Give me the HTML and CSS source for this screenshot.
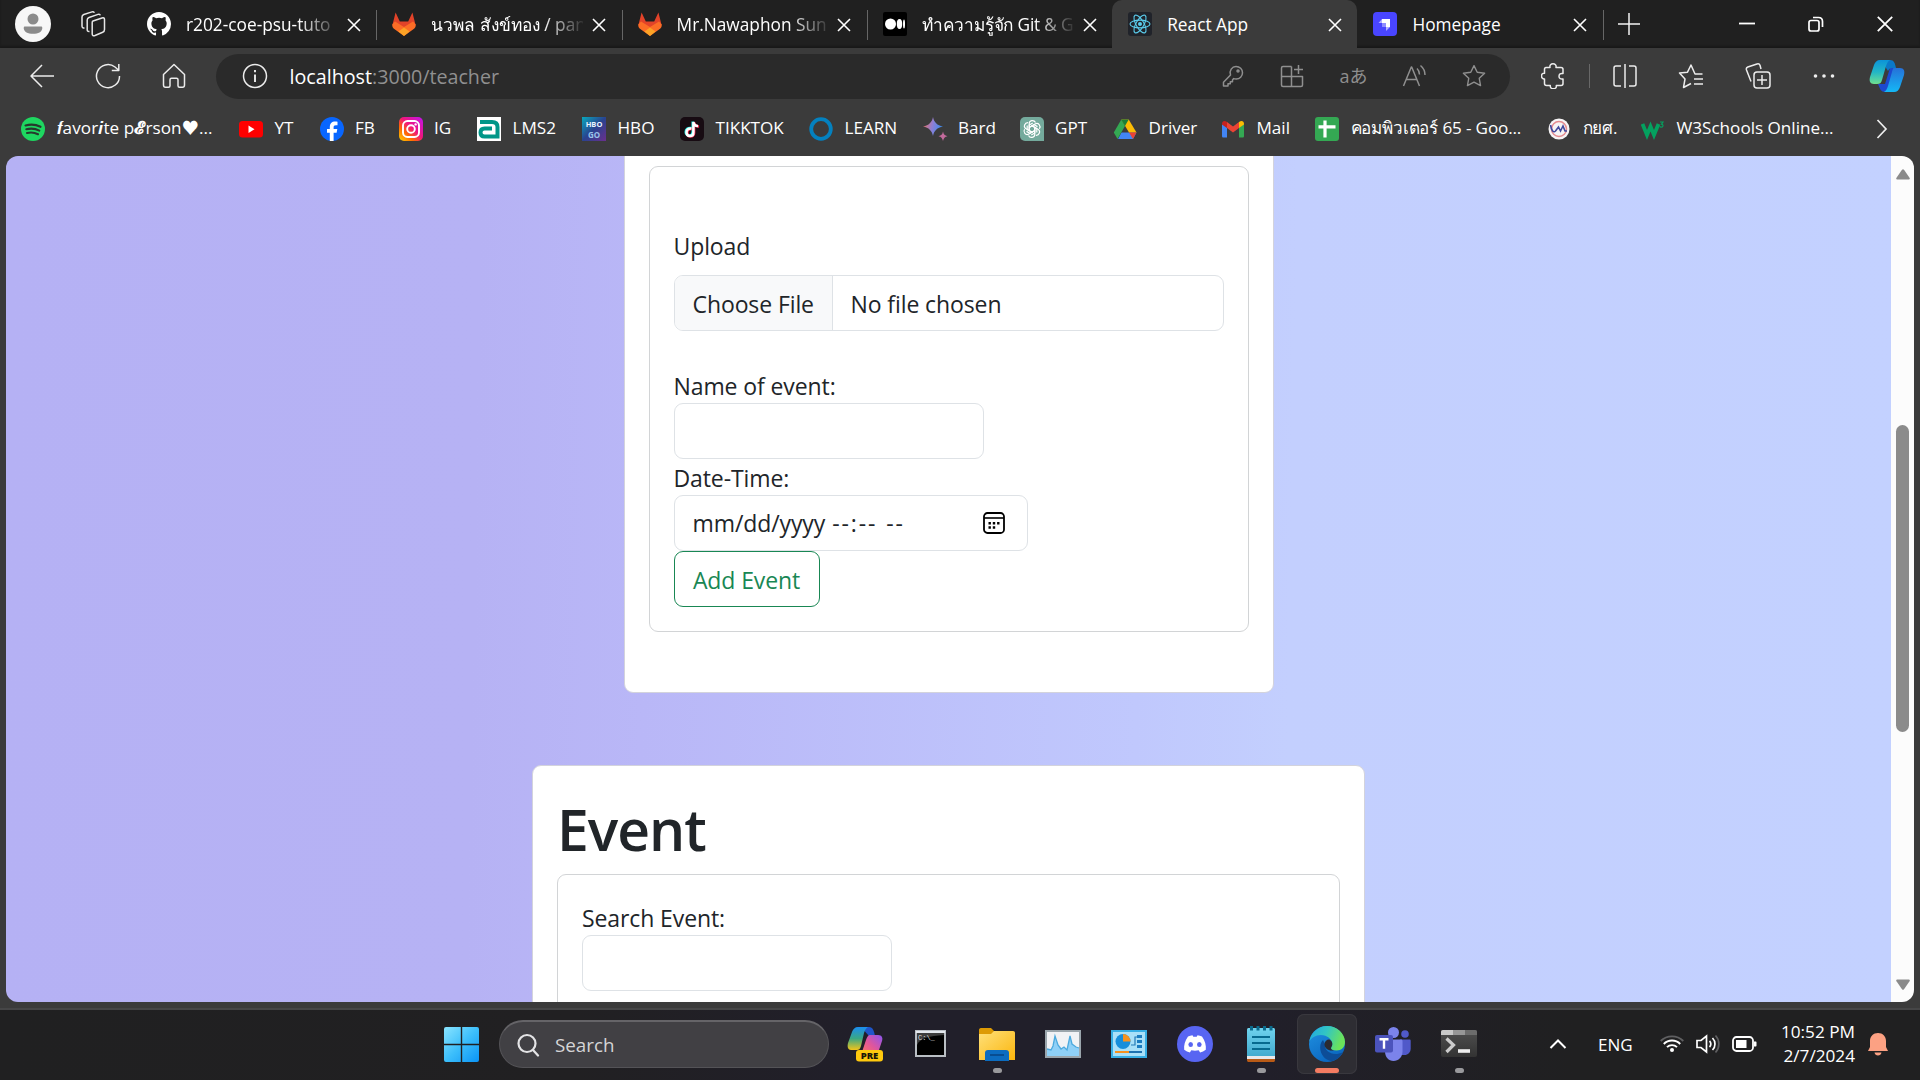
FILE: index.html
```html
<!DOCTYPE html>
<html lang="en">
<head>
<meta charset="utf-8">
<title>React App</title>
<link rel="stylesheet" href="styles.css">
</head>
<body>
<svg class="defs" width="0" height="0" aria-hidden="true">
  <defs>
    <symbol id="gitlab" viewBox="0 0 24 24"><path fill="#e24329" d="M0.4 13 3.6 0.500l4.200 9h8.400l4.200-9 3.200 12.500L12 17z"/><path fill="#fc6d26" d="M.3 12.500 3 9.600 12 15l9-5.400 2.700 2.900c.3 2-.7 3.500-2 4.600L12 24l-9.700-6.900C1 16 0 14.500.3 12.500z"/><path fill="#fca326" d="m6.500 19.500 5.500-4 5.500 4L12 24z"/></symbol>
    <symbol id="close" viewBox="0 0 14 14"><path d="M1 1l12 12M13 1 1 13" fill="none" stroke="currentColor" stroke-width="1.600"/></symbol>
    <linearGradient id="ig" x1="0" y1="1" x2="1" y2="0"><stop offset="0" stop-color="#ffd600"/><stop offset=".3" stop-color="#ff6a00"/><stop offset=".55" stop-color="#f0157e"/><stop offset="1" stop-color="#c013f0"/></linearGradient>
    <linearGradient id="bard" x1="0" y1=".5" x2="1" y2=".7"><stop offset="0" stop-color="#e3706e"/><stop offset=".45" stop-color="#8c7fd6"/><stop offset="1" stop-color="#2f8df0"/></linearGradient>
    <linearGradient id="hbo" x1="0" y1="0" x2="1" y2="1"><stop offset="0" stop-color="#08a9bd"/><stop offset=".5" stop-color="#29438f"/><stop offset="1" stop-color="#6b2f8d"/></linearGradient>
    <linearGradient id="cpL" x1="0" y1="0" x2="0" y2="1"><stop offset="0" stop-color="#0c93d8"/><stop offset=".5" stop-color="#22b6c6"/><stop offset="1" stop-color="#6fdf8f"/></linearGradient>
    <linearGradient id="cpR" x1="0" y1="0" x2="0" y2="1"><stop offset="0" stop-color="#2671d8"/><stop offset="1" stop-color="#14b8f6"/></linearGradient>
    <linearGradient id="preL" x1="0" y1="0" x2="0" y2="1"><stop offset="0" stop-color="#1b8df0"/><stop offset=".5" stop-color="#3aa884"/><stop offset="1" stop-color="#f3c419"/></linearGradient>
    <linearGradient id="preR" x1="0" y1="1" x2="1" y2="0"><stop offset="0" stop-color="#ff7a59"/><stop offset=".5" stop-color="#e0569c"/><stop offset="1" stop-color="#8a55f0"/></linearGradient>
    <linearGradient id="win" x1="0" y1="0" x2="1" y2="1"><stop offset="0" stop-color="#8ae4ff"/><stop offset=".5" stop-color="#3dbffb"/><stop offset="1" stop-color="#0a93f5"/></linearGradient>
    <linearGradient id="folder" x1="0" y1="0" x2="1" y2="1"><stop offset="0" stop-color="#ffe07a"/><stop offset="1" stop-color="#fbb60d"/></linearGradient>
    <linearGradient id="note" x1="0" y1="0" x2="0" y2="1"><stop offset="0" stop-color="#6fd3ee"/><stop offset="1" stop-color="#43abcf"/></linearGradient>
    <linearGradient id="edgeTop" x1="0" y1="0" x2="1" y2=".3"><stop offset="0" stop-color="#1fa6e4"/><stop offset=".5" stop-color="#32c5c4"/><stop offset="1" stop-color="#6be35a"/></linearGradient>
    <linearGradient id="edgeLow" x1="0" y1="0" x2=".6" y2="1"><stop offset="0" stop-color="#2193e3"/><stop offset="1" stop-color="#0a66bf"/></linearGradient>
    <linearGradient id="term" x1="0" y1="0" x2="0" y2="1"><stop offset="0" stop-color="#505050"/><stop offset="1" stop-color="#333333"/></linearGradient>
  </defs>
</svg>

<header class="tabstrip">
  <div class="profile"><svg width="36" height="36" viewBox="0 0 36 36"><circle cx="18" cy="18" r="18" fill="#f7f7f7"/><circle cx="18" cy="13" r="5.500" fill="#8b8b8b"/><path d="M9.500 20.500h17c.8 0 .8 1 .7 2.200-.4 3-3.700 5-9.200 5s-8.800-2-9.200-5c-.1-1.200 0-2.200.7-2.200z" fill="#8b8b8b"/></svg></div>
  <div class="workspaces"><svg width="26" height="26" viewBox="0 0 26 26" fill="none" stroke="#e6e6e6" stroke-width="1.500"><path d="m13 10 9-3c1.500-.5 2.500 0 2.500 1.500v10c0 1.500-.5 2.300-1.800 2.800L15 24.500c-1.800.6-2.800 0-2.800-1.500V11.500c0-.8.200-1.300.8-1.500z"/><path d="M9.500 20.500c-1.500.2-2.300-.4-2.300-1.800V9c0-1.200.5-2 1.800-2.500L18 3.400c1.200-.4 2 0 2.200 1"/><path d="M4.500 17C3 17.200 2 16.500 2 15V6c0-1.200.5-2 1.800-2.500L12 .9c1.200-.4 2 0 2.200 1"/></svg></div>
  <div class="tab"><svg class="fav" viewBox="0 0 16 16"><path fill="#fff" d="M8 0C3.580 0 0 3.580 0 8c0 3.540 2.290 6.530 5.470 7.590.4.070.55-.17.55-.38v-1.490c-2.010.37-2.530-.49-2.690-.94-.09-.23-.48-.94-.82-1.130-.28-.15-.68-.52-.01-.53.63-.01 1.080.58 1.230.82.720 1.210 1.870.87 2.330.66.070-.52.280-.87.510-1.070-1.780-.2-3.640-.89-3.640-3.950 0-.87.310-1.590.820-2.150-.08-.2-.36-1.020.08-2.120 0 0 .67-.21 2.200.82a7.600 7.600 0 0 1 4 0c1.530-1.040 2.200-.82 2.200-.82.44 1.100.16 1.920.08 2.120.51.560.82 1.270.82 2.150 0 3.070-1.870 3.750-3.650 3.950.29.250.54.730.54 1.480v2.200c0 .21.150.46.550.38A8 8 0 0 0 16 8c0-4.420-3.580-8-8-8z"/></svg><span class="title fade">r202-coe-psu-tuto</span><svg class="x"><use href="#close"/></svg></div>
  <div class="tab"><svg class="fav"><use href="#gitlab"/></svg><span class="title fade">นวพล สังข์ทอง / pan</span><svg class="x"><use href="#close"/></svg></div>
  <div class="tab"><svg class="fav"><use href="#gitlab"/></svg><span class="title fade">Mr.Nawaphon Sun</span><svg class="x"><use href="#close"/></svg></div>
  <div class="tab last"><svg class="fav" viewBox="0 0 24 24"><rect width="24" height="24" rx="2"/><g fill="#fff"><circle cx="7.500" cy="12" r="5.500"/><ellipse cx="16.500" cy="12" rx="2.700" ry="5"/><ellipse cx="21" cy="12" rx="1" ry="4.500"/></g></svg><span class="title fade thai-tab">ทำความรู้จัก Git &amp; G</span><svg class="x"><use href="#close"/></svg></div>
  <div class="tab active"><svg class="fav" viewBox="0 0 24 24"><rect width="24" height="24" rx="3" fill="#20232a"/><g fill="none" stroke="#5bcdec" stroke-width="1.100"><ellipse cx="12" cy="12" rx="10" ry="3.900"/><ellipse cx="12" cy="12" rx="10" ry="3.900" transform="rotate(60 12 12)"/><ellipse cx="12" cy="12" rx="10" ry="3.900" transform="rotate(120 12 12)"/></g><circle cx="12" cy="12" r="2" fill="#5bcdec"/></svg><span class="title">React App</span><svg class="x"><use href="#close"/></svg></div>
  <div class="tab"><svg class="fav" viewBox="0 0 24 24"><rect width="24" height="24" rx="4" fill="#4945ff"/><path fill="#fff" d="M9 7h8v8h-4v-4H9z"/><path fill="#b3b1ff" d="M9 7v4H5.500zM13 15h4l-4 4z"/><path fill="#8f8cff" d="M9 11h4v4h-3.500a.5.5 0 0 1-.5-.5z"/></svg><span class="title">Homepage</span><svg class="x"><use href="#close"/></svg></div>
  <div class="newtab"><svg width="22" height="22" viewBox="0 0 22 22"><path d="M11 0v22M0 11h22" stroke="#f2f2f2" stroke-width="1.500"/></svg></div>
  <div class="wincontrols">
    <svg width="16" height="16" viewBox="0 0 16 16"><path d="M0 7.500h16" stroke="#fff" stroke-width="1.800"/></svg>
    <svg width="16" height="16" viewBox="0 0 16 16" fill="none" stroke="#fff" stroke-width="1.700"><rect x="1" y="4.500" width="10" height="10.500" rx="2"/><path d="M5 1.500h5.500c2.500 0 4 1.500 4 4V11"/></svg>
    <svg width="16" height="16" viewBox="0 0 16 16"><path d="M.8.8l14.400 14.400M15.200.8.8 15.200" stroke="#fff" stroke-width="1.800"/></svg>
  </div>
</header>

<nav class="toolbar">
  <svg viewBox="0 0 26 26"><path d="M25 13H2M13 2 2 13l11 11"/></svg>
  <svg viewBox="0 0 26 26"><path d="M24.500 13A11.500 11.500 0 1 1 20 4l3.500 3M23.800 1v6.500h-7"/></svg>
  <svg viewBox="0 0 26 26"><path d="M2.500 11.500 13 1.500l10.500 10V22c0 1.500-.8 2.300-2 2.300h-3c-1 0-1.500-.6-1.500-1.500v-6c0-1-.5-1.500-1.500-1.500h-5c-1 0-1.500.5-1.500 1.500v6c0 .9-.5 1.500-1.500 1.500h-3c-1.200 0-2-.8-2-2.300z"/></svg>
  <div class="address">
    <svg class="info" viewBox="0 0 26 26"><circle cx="13" cy="13" r="11.500"/><path d="M13 11.500v7.500M13 7v2.200" stroke-width="1.900"/></svg>
    <span class="url"><b>localhost</b>:3000/teacher</span>
    <div class="actions">
      <svg viewBox="0 0 24 24"><path d="M15 2.500c3.800 0 6.500 2.800 6.500 6.300s-2.800 6.200-6.300 6.200c-1 0-1.700-.1-2.500-.4L11.500 16v1.800H9.300v2H7V22H2.500v-3.800l7-7.200C8 6.500 11 2.500 15 2.500z"/><circle cx="17" cy="7" r="1"/></svg>
      <svg viewBox="0 0 24 24"><path d="M11.500 2.500H3c-1 0-1.500.5-1.500 1.500v17c0 1 .5 1.500 1.500 1.500h18c1 0 1.500-.5 1.500-1.500v-8.500h-21M11.500 2.500v20M18.500 1v9M14 5.500h9"/></svg>
      <span class="translate">aあ</span>
      <svg viewBox="0 0 24 24"><path d="m1.500 22 7.800-19h.4l7.800 19M4.300 15.500h10.500M15 4.500c1.700 1.600 2.500 3.500 2.500 6M18.500 1.500c3 2.500 4.500 5.500 4.500 9.500"/></svg>
      <svg viewBox="0 0 26 26"><path d="m13 1.800 3.500 7.100 8 1.100-5.800 5.500 1.400 7.900L13 19.700l-7.100 3.700 1.400-7.900L1.500 10l8-1.100z"/></svg>
    </div>
  </div>
  <div class="tools">
    <svg viewBox="0 0 26 26"><path d="M5 4.500h4C8.500 2 10 .8 12 .8s3.500 1.200 3 3.700h5c1.200 0 2 .8 2 2v4c-2.500-.5-4 .7-4 2.700s1.500 3.200 4 2.700v4.600c0 1.200-.8 2-2 2h-4.700c.5 2.200-1 3.200-3 3.200s-3.300-1-3-3.200H5.500c-1.200 0-2-.8-2-2v-4.600C2 16.200.5 15 .5 13s1.500-3.100 3-2.700V6.500c0-1.200.5-2 1.500-2z"/></svg>
    <i></i>
    <svg viewBox="0 0 26 26"><path d="M9 3H4C2.800 3 2 3.800 2 5v16c0 1.200.8 2 2 2h5M17 3h5c1.200 0 2 .8 2 2v16c0 1.200-.8 2-2 2h-5M13 1v24"/></svg>
    <svg viewBox="0 0 26 26"><path d="M24.500 11H17L13 2 9.500 9.200 1.500 10l5.500 6-1.500 8.500 7.500-4M16 16h9M16 21h9"/></svg>
    <svg viewBox="0 0 26 26"><rect x="9" y="9" width="16" height="16" rx="3"/><path d="M17 12v10M12 17h10M6 18.500 1.500 7c-.5-1.500 0-2.500 1.300-3L12 1c1.500-.5 2.500 0 3 1.300L16 6"/></svg>
    <svg viewBox="0 0 26 26"><g fill="#eee" stroke="none"><circle cx="4.500" cy="13" r="1.800"/><circle cx="13" cy="13" r="1.800"/><circle cx="21.500" cy="13" r="1.800"/></g></svg>
  </div>
  <svg class="copilot" viewBox="0 0 36 34"><path stroke="none" fill="#1c49cf" d="M9 25h7l5-16h6l-6 19c-1 3-2 5-5 5-4 0-5-3-7-8z"/><path stroke="none" fill="#0b78c8" d="M12 1h9c4 0 5 3 6 8h-4c-2 0-3 1-4 3z"/><path stroke="none" fill="url(#cpL)" d="M11 1h10c-2 1-3 3-4 6l-4 14c-1 3-2 4-5 4H5c-4 0-5-3-4-7L5 6c1-3 3-5 6-5z"/><path stroke="none" fill="url(#cpR)" d="M25 9h6c4 0 5 3 4 7l-4 12c-1 3-3 5-6 5H15c2-1 3-3 4-6l4-14c.5-2 1-4 2-4z"/></svg>
</nav>

<nav class="bookmarks">
  <a><svg viewBox="0 0 24 24"><circle cx="12" cy="12" r="12" fill="#1ed760"/><path d="M4.500 8.500c5-1.500 10.500-1 15 1.300M5.300 12.300c4.500-1.200 9-.8 13 1.300M6 16c4-1 7.500-.6 11 1.200" fill="none" stroke="#263a2d" stroke-width="2.100" stroke-linecap="round"/></svg><span class="fancy">𝒇avor𝒊te p<b>𝓔</b>rson♥...</span></a>
  <a><svg viewBox="0 0 24 24"><rect y="4" width="24" height="16.500" rx="3.500" fill="#f00"/><path fill="#fff" d="m9.500 8.500 6 3.700-6 3.700z"/></svg><span>YT</span></a>
  <a><svg viewBox="0 0 24 24"><circle cx="12" cy="12" r="12" fill="#0866ff"/><path fill="#fff" d="M9.800 24v-8.300H7V12h2.800v-1.600c0-4 1.900-5.800 5.500-5.800.7 0 1.600.1 2.200.2v3.400h-1.600c-1.800 0-2.300.8-2.300 2.300V12h3.700l-.7 3.700h-3V24z"/></svg><span>FB</span></a>
  <a><svg viewBox="0 0 24 24"><rect width="24" height="24" rx="5" fill="url(#ig)"/><g fill="none" stroke="#fff" stroke-width="1.900"><rect x="4" y="4" width="16" height="16" rx="4.500"/><circle cx="12" cy="12" r="3.800"/></g><circle cx="16.600" cy="7.400" r="1.200" fill="#fff"/></svg><span>IG</span></a>
  <a><svg viewBox="0 0 24 24"><path fill="#fff" d="M0 0h24v24H0z"/><path fill="none" stroke="#009688" stroke-width="4" d="M3 5h12c4 0 5.500 2 5.500 5v9.500H7.500c-3 0-4-1.500-4-4s1-4 4-4H15"/></svg><span>LMS2</span></a>
  <a><svg viewBox="0 0 24 24"><path fill="url(#hbo)" d="M0 0h24v24H0z"/><text x="12" y="10" class="hbo">HBO</text><text x="12" y="20.500" class="go">GO</text></svg><span>HBO</span></a>
  <a><svg viewBox="0 0 24 24"><rect width="24" height="24" rx="5" fill="#170b12"/><g fill="none" stroke-width="2.500"><path stroke="#25f4ee" d="M11 11c-3-.5-5.300 1.400-5.300 3.900 0 2.300 1.700 3.600 3.500 3.600s3.500-1.300 3.500-3.600V4.500"/><path stroke="#fe2c55" d="M12 12c-3-.5-4.700 1.400-4.700 3.700s1.500 3.800 3.300 3.800 3.500-1.300 3.500-3.600V5.500c.5 2.500 2.500 4 5 4"/><path stroke="#fff" d="M11.500 11.500c-3-.5-5 1.400-5 3.800s1.500 3.700 3.400 3.700 3.500-1.300 3.500-3.600V5c.3 2.600 2.300 4 4.600 4"/></g></svg><span>TIKKTOK</span></a>
  <a><svg viewBox="0 0 24 24"><circle cx="12" cy="12" r="9.800" fill="none" stroke="#0481bf" stroke-width="3.800"/></svg><span>LEARN</span></a>
  <a><svg viewBox="0 0 24 24" class="spill"><path fill="url(#bard)" d="M10 0c1.200 5.500 4 8.300 10 9.500-6 1.200-8.800 4-10 9.500C8.800 13.500 6 10.700 0 9.500 6 8.300 8.800 5.500 10 0z"/><path fill="#c36b9c" d="M20 14.500c.6 3 1.800 4 4.500 4.700-2.700.7-3.900 1.800-4.500 4.800-.6-3-1.800-4.100-4.500-4.800 2.700-.7 3.900-1.700 4.500-4.700z"/></svg><span>Bard</span></a>
  <a><svg viewBox="0 0 24 24"><path fill="#74aa9c" d="M5 0h14a5 5 0 0 1 5 5v19H5a5 5 0 0 1-5-5V5a5 5 0 0 1 5-5z"/><g fill="none" stroke="#fff" stroke-width="1.200"><path id="petal" d="M12 8.800 9.200 10.400V6.800C9.200 3 14 2.500 15.500 5.500M12 8.800l4.800 2.800v4"/><use href="#petal" transform="rotate(60 12 12)"/><use href="#petal" transform="rotate(120 12 12)"/><use href="#petal" transform="rotate(180 12 12)"/><use href="#petal" transform="rotate(240 12 12)"/><use href="#petal" transform="rotate(300 12 12)"/></g></svg><span>GPT</span></a>
  <a><svg viewBox="0 0 24 24"><path fill="#4285f4" d="m5 22 3.500-6.500H23.500L20 22z"/><path fill="#fbbc04" d="M8.300 2.500h7.400l7.800 13H16z"/><path fill="#34a853" d="M8.300 2.500 12 9 4.500 22 .8 15.500z"/><path fill="#ea4335" d="M16 15.500h7.500L20 22z"/><path fill="#188038" d="M8.300 2.500h7.400L12 9z"/></svg><span>Driver</span></a>
  <a><svg viewBox="0 0 24 24"><path fill="#4285f4" d="M1 7l5 3.500V20.500H2.500C1.500 20.500 1 20 1 19z"/><path fill="#34a853" d="M18 10.500 23 7v12c0 1-.5 1.500-1.500 1.500H18z"/><path fill="#ea4335" d="M6 5l6 4.500L18 5v6l-6 4.500L6 11z"/><path fill="#c5221f" d="M1 7c0-3 2.500-4 5-2v6L1 7.500z"/><path fill="#fbbc04" d="M23 7c0-3-2.500-4-5-2v6l5-3.500z"/></svg><span>Mail</span></a>
  <a><svg viewBox="0 0 24 24"><rect width="24" height="24" rx="3" fill="#34a853"/><path d="M10 3.500v17M3.500 9.800h17" stroke="#fff" stroke-width="3.200"/></svg><span class="thai">คอมพิวเตอร์ 65 - Goo...</span></a>
  <a><svg viewBox="0 0 24 24"><circle cx="12" cy="12" r="10.500" fill="#f6f4f5"/><circle cx="12" cy="12" r="7.500" fill="none" stroke="#e58b8f" stroke-width="1.500"/><path d="M3.500 8c1 6 3 8 5 6l3-4 2 4 2.500-5 2 5h2" fill="none" stroke="#41489c" stroke-width="1.600"/></svg><span class="thai">กยศ.</span></a>
  <a><svg viewBox="0 0 24 24"><path d="m1.500 7 4.500 11 3.500-8.500L13 18l4.500-11" fill="none" stroke="#04a15f" stroke-width="3.800"/><path d="M19 5h3l-1.500 2.200c2 0 2 3-.2 3-.9 0-1.300-.4-1.500-.9" fill="none" stroke="#04a15f" stroke-width="1.200"/></svg><span>W3Schools Online...</span></a>
  <a class="more"><svg viewBox="0 0 24 24"><path d="m6.500 3 8.500 9-8.500 9" fill="none" stroke="#eee" stroke-width="1.700"/></svg></a>
</nav>

<main class="viewport">
  <div class="page">
    <section class="card upload-card">
      <div class="panel">
        <label class="upload-label">Upload</label>
        <div class="control file"><span class="pick">Choose File</span><span class="picked">No file chosen</span></div>
        <label class="spaced">Name of event:</label>
        <input class="control text" type="text">
        <label>Date-Time:</label>
        <div class="control datetime"><span>mm/dd/yyyy</span><span class="dashes">--:--&nbsp;</span><span class="meridiem">--</span><svg width="24" height="24" viewBox="0 0 24 24"><rect x="2" y="2" width="20" height="20" rx="3.500" fill="none" stroke="#000" stroke-width="1.800"/><path d="M2 7h20" stroke="#000" stroke-width="1.600"/><path d="M6.500 12.300h2.400m1.900 0h2.400m1.900 0h2.400M6.500 16.500h2.400m1.900 0h2.400" stroke="#000" stroke-width="2.400"/></svg></div>
        <button class="add">Add Event</button>
      </div>
    </section>
    <section class="card event-card">
      <h1>Event</h1>
      <div class="panel">
        <label>Search Event:</label>
        <input class="control text" type="text">
      </div>
    </section>
  </div>
  <div class="scrollbar">
    <svg width="14" height="11" viewBox="0 0 14 11"><path d="M6 .8c.6-.8 1.400-.8 2 0l5.500 8c.6 1 .3 1.700-.8 1.700H1.300c-1.100 0-1.400-.7-.8-1.700z" fill="#8b8b8b"/></svg>
    <span class="thumb"></span>
    <svg width="14" height="11" viewBox="0 0 14 11"><path d="M6 10.200c.6.800 1.400.8 2 0l5.500-8c.6-1 .3-1.700-.8-1.700H1.300C.2.500-.1 1.200.5 2.200z" fill="#8b8b8b"/></svg>
  </div>
</main>

<footer class="taskbar">
  <svg class="start" viewBox="0 0 35 35" fill="url(#win)"><path d="M2 0h14.800v16.800H0V2a2 2 0 0 1 2-2zM18.200 0H33a2 2 0 0 1 2 2v14.800H18.200zM0 18.200h16.800V35H2a2 2 0 0 1-2-2zM18.200 18.200H35V33a2 2 0 0 1-2 2H18.200z"/></svg>
  <div class="search"><svg width="24" height="24" viewBox="0 0 24 24" fill="none" stroke="#e4e4e6" stroke-width="2.200" stroke-linecap="round"><circle cx="10" cy="10.500" r="8.500"/><path d="m16 17 5 5.500"/></svg><span>Search</span></div>
  <div class="apps">
    <div class="app"><svg viewBox="0 0 36 36"><path fill="#1f55c9" d="M14 1h8c4 0 5 4 6 9h-6z"/><path fill="url(#preL)" d="M11 1h10c-2 1-3 3-4 6l-3 13c-1 3-2 4-4 4H4c-3 0-4-3-3-7L5 6c1-3 3-5 6-5z"/><path fill="url(#preR)" d="M23 9h8c4 0 5 3 4 6l-3 9-3 5H14l5-15c1-3 2-5 4-5z"/><rect x="9" y="24" width="27" height="11.500" rx="3" fill="#ffc90e"/><text x="22.500" y="33.200" class="pre">PRE</text></svg></div>
    <div class="app"><svg viewBox="0 0 36 36"><path fill="#b9bec4" d="M2 4h31v27H2z"/><path fill="#e4e8ee" d="M3 5h29v2H3z"/><path d="M4 7h27v22H4z"/><path fill="#3d3d3d" d="M4 7h27v2C16 10 7 12 4 19z"/><text x="5" y="13.500" class="cmd">C:\_</text></svg></div>
    <div class="app open"><svg viewBox="0 0 36 36"><path fill="#dd9a05" d="M0 4c0-1 .5-2 2-2h10l4 4v6H0z"/><path fill="url(#folder)" d="M0 8h12l3-3h19c1.300 0 2 .7 2 2v27H0z"/><path fill="#0c6cc0" d="M6 35V27c0-2 1-3 3-3h18c2 0 3 1 3 3v8z"/><path d="M11 29h14" stroke="#084a8c" stroke-width="1.800"/></svg></div>
    <div class="app"><svg viewBox="0 0 36 36"><path fill="#9aa5ac" d="M0 4h36v28H0z"/><path fill="#f0f2f5" d="M2 6h32v24H2z"/><path fill="#8fd0f7" d="M2 23l4 1 2-4 2-10 3 9 3 4 3-2 3 3 3-14 2 8 4 3 3 1v8H2z"/><path fill="none" stroke="#4ba9de" stroke-width="1.300" d="M2 23l4 1 2-4 2-10 3 9 3 4 3-2 3 3 3-14 2 8 4 3 3 1"/></svg></div>
    <div class="app"><svg viewBox="0 0 36 36"><path fill="#37afe5" d="M0 4h36v28H0z"/><path fill="#a9e0f8" d="M2 6h32v24H2z"/><circle cx="12" cy="15.500" r="7.500" fill="#168edb"/><path fill="#f6921e" d="M12 15.500V8a7.500 7.500 0 0 1 7.500 7.500z"/><path d="M20 19h4v-8h3" fill="none" stroke="#247ab6" stroke-width="1.200"/><path d="M26 10.500h5M26 15.500h5M26 20.500h5" stroke="#1b7cc0" stroke-width="3"/><path d="M4 26h14" stroke="#f6921e" stroke-width="2"/><path d="M18 26h13" stroke="#1c72b1" stroke-width="2"/></svg></div>
    <div class="app"><svg viewBox="0 0 36 36"><circle cx="18" cy="18" r="18" fill="#5865f2"/><path fill="#fff" d="M11 10.500c1.500-.7 3-1.100 4.500-1.300l.8 1.500h3.400l.8-1.500c1.500.2 3 .6 4.500 1.300 3 4.500 4.300 8.700 3.800 13.300-1.800 1.300-3.700 2.200-5.700 2.700l-1.400-2.200c-2.400.6-5 .6-7.400 0l-1.400 2.200c-2-.5-3.900-1.400-5.700-2.700C6.700 19.200 8 15 11 10.500z"/><ellipse cx="13.700" cy="18.500" rx="2.300" ry="2.500" fill="#5865f2"/><ellipse cx="22.300" cy="18.500" rx="2.300" ry="2.500" fill="#5865f2"/></svg></div>
    <div class="app open"><svg viewBox="0 0 36 36"><path fill="#b85a16" d="M4 32h28v2c0 1.500-.5 2-2 2H6c-1.500 0-2-.5-2-2z"/><path fill="#e8e8ea" d="M4 29h28v4H4z"/><path fill="url(#note)" d="M4 4c0-1.500.5-2 2-2h24c1.500 0 2 .5 2 2v26H4z"/><path d="M9 11h18M9 17h18M9 23h18" stroke="#076a8f" stroke-width="2"/><path d="M8.500 0v4.500M15 0v4.500M21.500 0v4.500M28 0v4.500" stroke="#0b6b8c" stroke-width="3"/></svg></div>
    <div class="app current"><svg viewBox="0 0 36 36"><circle cx="18" cy="18" r="18" fill="url(#edgeLow)"/><path fill="#0d4d97" d="M14 14c-6 6-2 20 9 21 5-1 9-5 11-9-9 5-19 0-18-8z"/><path fill="url(#edgeTop)" d="M.2 16C1.500 7 9 0 18 0c10 0 18 7.500 18 16 0 5-3.500 8.500-8.500 8.500-3.500 0-5.500-1-5.500-2.300 0-1.200 1.300-1.800 1.300-4.200 0-4.500-5-9-11.500-9C6.500 9 2 12 .2 16z"/><path fill="#2b2a31" d="M15.500 18c.5-3.500 3-5 5-4.500 2 1 2.800 2.800 2.800 4.500 0 2.400-1.300 3-1.300 4.200 0 1 1 1.700 3 2.100-5 1.200-9.500-1.800-9.500-6.300z"/></svg></div>
    <div class="app"><svg viewBox="0 0 36 36"><circle cx="18.500" cy="6.500" r="5.500" fill="#7b83eb"/><circle cx="30" cy="8" r="3.800" fill="#5059c9"/><path fill="#5059c9" d="M25 13.500h9.500c.8 0 1.200.5 1.200 1.200v7.800c0 4-3 6.500-6 6.500H25z"/><path fill="#7b83eb" d="M10 13.500h16c1 0 1.500.6 1.500 1.500v10.500c0 5.500-4 9.500-9 9.500S10 31 10 25.500z"/><rect y="9" width="18" height="17.500" rx="2" fill="#4b53bc"/><path d="M4.500 13.300h9M9 13.300v9.500" stroke="#fff" stroke-width="2.400"/></svg></div>
    <div class="app open"><svg viewBox="0 0 36 36"><rect y="4" width="36" height="27" rx="2" fill="url(#term)"/><path fill="#c9c9c9" d="M2 4h10v5H0V6c0-1.300.7-2 2-2z"/><path fill="#979797" d="M12 4h12v5H12z"/><path fill="#6c6c6c" d="M24 4h10c1.300 0 2 .7 2 2v3H24z"/><path d="m5.500 12.500 7 6.500-7 7" fill="none" stroke="#ccc" stroke-width="3.200"/><path d="M17 25h12" stroke="#eee" stroke-width="3.600"/></svg></div>
  </div>
  <div class="tray">
    <svg width="18" height="18" viewBox="0 0 18 18"><path d="m1.500 13 7.500-7.500L16.500 13" fill="none" stroke="#fff" stroke-width="2"/></svg>
    <span class="lang">ENG</span>
    <svg class="wifi" width="24" height="20" viewBox="0 0 24 20" fill="none" stroke-width="1.900"><path stroke="#5f5f61" d="M.7 8a16 16 0 0 1 22.600 0"/><path stroke="#fff" d="M3.800 11a11.500 11.500 0 0 1 16.400 0M7 14.200a7 7 0 0 1 10 0"/><circle cx="12" cy="17" r="2" fill="#fff" stroke="none"/></svg>
    <svg class="sound" width="24" height="20" viewBox="0 0 24 20" fill="none" stroke="#fff" stroke-width="1.700"><path d="M1 6.500h4L10.500 2v16L5 13.500H1zM13.500 7a4 4 0 0 1 0 6M16.500 4a8.500 8.500 0 0 1 0 12"/><path stroke="#5f5f61" d="M19.500 1.500a12.500 12.500 0 0 1 0 17"/></svg>
    <svg class="battery" width="25" height="18" viewBox="0 0 25 18"><rect x="1" y="2" width="20" height="14" rx="3.500" fill="none" stroke="#fff" stroke-width="1.800"/><rect x="4" y="5" width="10.500" height="8" fill="#fff"/><path d="M22 6.500h1.500c.7 0 1 .5 1 1v3c0 .5-.3 1-1 1H22z" fill="#fff"/></svg>
    <div class="clock"><span>10:52 PM</span><span>2/7/2024</span></div>
    <svg class="bell" width="20" height="24" viewBox="0 0 20 24" fill="#fca183"><path d="M10 1c4.700 0 8 3.500 8 8v6l2 4H0l2-4V9c0-4.500 3.300-8 8-8zM6.500 20.500h7c-.3 1.700-1.700 3-3.500 3s-3.200-1.300-3.500-3z"/></svg>
  </div>
</footer>
</body>
</html>
```
FILE: styles.css
```css
* { box-sizing: border-box; }

body {
  margin: 0;
  width: 1920px;
  height: 1080px;
  overflow: hidden;
  display: flex;
  flex-direction: column;
  background: #3b3b3b;
  font-family: "Open Sans", "Noto Sans", "Noto Sans CJK JP", sans-serif;
  color: #fff;
}

svg { flex: none; display: block; }
.defs { position: absolute; }
.spill { overflow: visible; }

/* Tab strip */
.tabstrip {
  height: 48px;
  flex: none;
  display: flex;
  background: #202020;
  box-shadow: inset 0 -2px 2px #191919;
  font-size: 17.3px;
}
.profile { width: 66px; display: grid; place-items: center; }
.workspaces { width: 65px; padding-left: 14px; display: flex; align-items: center; }
.tab {
  width: 245.3px;
  display: flex;
  align-items: center;
  padding: 0 15.5px 0 16px;
  position: relative;
}
.tab::after {
  content: "";
  position: absolute;
  right: -1px;
  top: 10px;
  width: 1px;
  height: 30px;
  background: #666;
}
.tab.last::after, .tab.active::after { display: none; }
.tab.active { background: #3b3b3b; border-radius: 10px 10px 0 0; }
.fav { width: 24px; height: 24px; }
.title {
  margin-left: 15px;
  width: 152px;
  line-height: 47px;
  white-space: nowrap;
}
.fade {
  -webkit-mask-image: linear-gradient(90deg, #000 112px, transparent 155px);
  mask-image: linear-gradient(90deg, #000 112px, transparent 155px);
}
.thai-tab { letter-spacing: -.2px; }
.x { width: 14px; height: 14px; margin: 2px 0 0 auto; }
.newtab { width: 53px; display: grid; place-items: center; }
.wincontrols { flex: 1; display: flex; align-items: center; justify-content: flex-end; gap: 53px; padding-right: 27px; }

/* Toolbar */
.toolbar {
  height: 56px;
  flex: none;
  display: flex;
  align-items: center;
  padding-left: 28.5px;
  gap: 40px;
}
.toolbar svg { width: 26px; height: 26px; fill: none; stroke: #ececec; stroke-width: 1.5; stroke-linejoin: round; }
.address {
  width: 1294px;
  height: 45px;
  margin-left: -11px;
  flex: none;
  border-radius: 23px;
  background: #2a2a2a;
  display: flex;
  align-items: center;
  padding: 0 24px 0 26px;
}
.url { margin-left: 22px; color: #909090; font-size: 19.7px; }
.url b { color: #fff; font-weight: 400; }
.actions { margin-left: auto; display: flex; align-items: center; justify-content: space-between; width: 265px; }
.toolbar .actions svg { stroke: #8f8f8f; width: 24px; height: 24px; }
.translate { color: #8f8f8f; font-size: 18px; width: 27px; white-space: nowrap; line-height: 24px; }
.tools { display: flex; align-items: center; gap: 40.3px; margin-left: -9px; }
.tools i { width: 1.5px; height: 24px; background: #686868; margin: 0 -18.5px 0 -18px; }
.toolbar .copilot { width: 36px; height: 34px; margin-left: -8px; }

/* Bookmarks */
.bookmarks {
  height: 52px;
  flex: none;
  display: grid;
  grid-template-columns: 218px 80.5px 79px 78.5px 105px 98px 129px 113.5px 97px 93.5px 108px 94px 232px 94px 230px 60px;
  padding: 0 0 3px 21px;
  align-items: center;
  font-size: 17.1px;
}
.bookmarks a { display: flex; align-items: center; gap: 11.5px; white-space: nowrap; line-height: 24px; }
.bookmarks a > span { margin-top: -1px; }
.bookmarks svg { width: 24px; height: 24px; }
.thai { letter-spacing: -.15px; }
.fancy { letter-spacing: .1px; }
.fancy b { letter-spacing: 1px; }
.hbo, .go { font: 700 7.5px "Open Sans", sans-serif; fill: #e8f4ff; text-anchor: middle; }
.go { font-size: 8px; fill: #9ac4ea; }

/* Web page */
.viewport {
  flex: none;
  width: 1908px;
  height: 846px;
  margin-left: 6px;
  border-radius: 12px;
  overflow: hidden;
  display: flex;
}
.page {
  width: 1885px;
  overflow: hidden;
  display: flex;
  flex-direction: column;
  align-items: center;
  background: linear-gradient(91deg, #b5b1f4 0%, #b6b2f4 25%, #b9b7f7 34%, #c0c8fd 60%, #c3cffe 68%, #c3d1ff 100%);
  font-size: 23px;
  line-height: 36px;
  letter-spacing: -.1px;
  color: #212529;
}
.card { flex: none; background: #fff; border: 1px solid #d3d3dc; border-radius: 9px; padding: 24px; }
.panel { border: 1px solid #d2d4d6; border-radius: 9px; padding: 24px; }
label { display: block; height: 36px; line-height: 38px; }
.upload-card { width: 650px; height: 552px; margin-top: -15px; }
.upload-card .panel { height: 466px; }
.upload-label { margin-top: 37px; margin-bottom: 11px; line-height: 36px; }
.spaced { margin-top: 36px; }
.control {
  display: flex;
  align-items: center;
  height: 56px;
  width: 310px;
  border: 1px solid #dee2e6;
  border-radius: 9px;
  background: #fff;
  overflow: hidden;
}
.control.file { width: 550px; }
.pick, .picked { line-height: 58px; height: 56px; }
.pick { background: #f8f9fa; border-right: 1px solid #dee2e6; width: 158px; padding-left: 18px; }
.picked { padding-left: 18px; }
.control.datetime { width: 354px; padding-left: 18px; padding-right: 21px; line-height: 58px; }
.datetime svg { margin-left: auto; margin-top: -1px; }
.dashes { margin-left: 7px; letter-spacing: 1.9px; }
.meridiem { letter-spacing: 1.9px; margin-left: 1px; }
.add {
  display: block;
  width: 146px;
  height: 56px;
  padding: 2px 0 0;
  border: 1.5px solid #198754;
  border-radius: 9px;
  background: #fff;
  color: #198754;
  font: inherit;
  letter-spacing: inherit;
}
.event-card { width: 833px; height: 400px; margin-top: 72px; }
h1 { margin: 6px 0 11px; font-size: 57px; line-height: 67px; font-weight: 600; letter-spacing: -1px; }
.event-card .panel { height: 300px; }

.scrollbar { width: 23px; background: #fcfcfc; display: flex; flex-direction: column; align-items: center; padding: 13px 0 12px; }
.thumb { width: 13px; height: 307px; margin-top: 245px; margin-bottom: auto; border-radius: 7px; background: #8b8b8b; }

/* Taskbar */
.taskbar {
  height: 72px;
  margin-top: auto;
  flex: none;
  display: flex;
  align-items: center;
  padding-bottom: 2px;
  border-top: 2px solid #464647;
  background: linear-gradient(90deg, #202021 0%, #212022 30%, #211f2a 45%, #211f2a 65%, #202021 82%);
}
.start { width: 35px; height: 35px; margin-left: 444px; }
.search {
  margin-left: 20px;
  width: 330px;
  height: 48px;
  border-radius: 24px;
  background: #414044;
  border: 1px solid #545357;
  border-top: 2px solid #656468;
  display: flex;
  align-items: center;
  padding-left: 17px;
  gap: 14px;
  font-size: 18.8px;
  color: #d5d5d6;
}
.apps { display: flex; gap: 6px; margin-left: 6px; }
.app { width: 60px; height: 60px; display: flex; justify-content: center; padding-top: 12px; border-radius: 7px; position: relative; }
.app svg { width: 36px; height: 36px; }
.open::after, .current::after {
  content: "";
  position: absolute;
  left: 50%;
  bottom: 1px;
  width: 9px;
  height: 5px;
  margin-left: -4.5px;
  border-radius: 3px;
  background: #99999c;
}
.current { background: #2e2d33; box-shadow: inset 0 0 0 1px #39383e; }
.current::after { width: 24px; margin-left: -12px; background: #f47c62; }
.pre { font: 800 9.5px "Open Sans", sans-serif; text-anchor: middle; fill: #1c1608; }
.cmd { font: 7px "Liberation Mono", monospace; fill: #ddd; }
.tray { flex: 1; display: flex; align-items: center; justify-content: flex-end; padding-right: 32px; }
.lang { margin-left: 31px; font-size: 17px; width: 34px; }
.wifi { margin-left: 28px; margin-top: -3px; }
.sound { margin-left: 12px; }
.battery { margin-left: 12px; }
.clock { display: flex; flex-direction: column; align-items: flex-end; width: 98px; font-size: 17.2px; line-height: 24px; }
.bell { margin: 0 0 0 13px; }
```
